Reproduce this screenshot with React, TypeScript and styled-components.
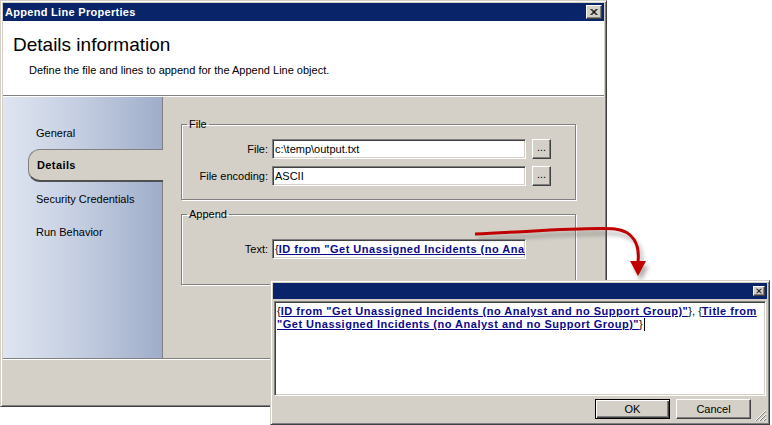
import styled, { createGlobalStyle } from 'styled-components'

const GlobalStyle = createGlobalStyle`
  html, body {
    margin: 0;
    padding: 0;
    background: #ffffff;
  }
  body {
    font-family: "Liberation Sans", Arial, sans-serif;
    font-size: 11px;
    color: #000;
  }
`

const Desktop = styled.div`
  position: relative;
  width: 772px;
  height: 425px;
  overflow: hidden;
  background: #fff;
`

const Window = styled.div<{ $left: number; $top: number; $w: number; $h: number }>`
  position: absolute;
  left: ${p => p.$left}px;
  top: ${p => p.$top}px;
  width: ${p => p.$w}px;
  height: ${p => p.$h}px;
  box-sizing: border-box;
  background: #d4d0c8;
  border-top: 1px solid #d4d0c8;
  border-left: 1px solid #d4d0c8;
  border-right: 1px solid #404040;
  border-bottom: 1px solid #404040;
  box-shadow: inset 1px 1px 0 #fff, inset -1px -1px 0 #808080;
  padding: 2px;
  display: flex;
  flex-direction: column;
`

const TitleBar = styled.div<{ $h: number }>`
  height: ${p => p.$h}px;
  flex: none;
  background: #0a246a;
  color: #fff;
  font-weight: bold;
  letter-spacing: 0.3px;
  display: flex;
  align-items: center;
  justify-content: space-between;
  padding: 0 2px 0 2px;
`

const CloseBox = styled.div<{ $size: number }>`
  width: ${p => p.$size}px;
  height: ${p => p.$size - 2}px;
  background: #d4d0c8;
  box-sizing: border-box;
  border-top: 1px solid #fff;
  border-left: 1px solid #fff;
  border-right: 1px solid #404040;
  border-bottom: 1px solid #404040;
  box-shadow: inset -1px -1px 0 #808080;
  display: flex;
  align-items: center;
  justify-content: center;
`

const Header = styled.div`
  height: 75px;
  flex: none;
  background: #fff;
  border-bottom: 1px solid #808080;
  box-shadow: 0 1px 0 #fff;
  margin-bottom: 1px;
  padding: 13px 0 0 10px;
  box-sizing: border-box;
`

const HeaderTitle = styled.div`
  font-size: 19px;
  line-height: 21px;
`

const HeaderText = styled.div`
  margin: 9px 0 0 16px;
  line-height: 13px;
`

const Body = styled.div`
  flex: none;
  height: 261px;
  display: flex;
`

const Nav = styled.div`
  width: 160px;
  flex: none;
  background: linear-gradient(to right, #dfe5f1 0%, #c3cde0 50%, #9fadca 100%);
  border-right: 1px solid #808080;
  box-sizing: border-box;
  padding-top: 19px;
  display: flex;
  flex-direction: column;
`

const NavItem = styled.div<{ $active?: boolean }>`
  height: 33px;
  box-sizing: border-box;
  margin-left: 25px;
  padding-left: 8px;
  display: flex;
  align-items: center;
  ${p =>
    p.$active &&
    `
    margin-right: -1px;
    position: relative;
    font-weight: bold;
    letter-spacing: 0.4px;
    background: #d4d0c8;
    border: 1px solid #808080;
    border-right: none;
    border-bottom: 2px solid #505050;
    border-radius: 12px 0 0 12px;
  `}
`

const Content = styled.div`
  flex: 1;
  padding: 21px 28px 0 18px;
  display: flex;
  flex-direction: column;
  gap: 8px;
`

const Group = styled.fieldset<{ $pt: number; $pb: number }>`
  margin: 0;
  padding: ${p => p.$pt}px 0 ${p => p.$pb}px 0;
  border: 1px solid #808080;
  box-shadow: inset 1px 1px 0 #fff, 1px 1px 0 #fff;
  display: flex;
  flex-direction: column;
  gap: 7px;
`

const Legend = styled.legend`
  margin-left: 5px;
  padding: 0 2px;
  line-height: 13px;
`

const Row = styled.div`
  display: flex;
  align-items: center;
  height: 20px;
`

const Label = styled.div`
  width: 86px;
  text-align: right;
  margin-right: 4px;
`

const Input = styled.div`
  width: 254px;
  height: 20px;
  box-sizing: border-box;
  background: #fff;
  border-top: 1px solid #808080;
  border-left: 1px solid #808080;
  border-right: 1px solid #fff;
  border-bottom: 1px solid #fff;
  box-shadow: inset 1px 1px 0 #404040, inset -1px -1px 0 #d4d0c8;
  padding: 0 2px;
  display: flex;
  align-items: center;
  white-space: nowrap;
  overflow: hidden;
`

const Button = styled.div<{ $w: number; $default?: boolean }>`
  width: ${p => p.$w}px;
  height: 20px;
  box-sizing: border-box;
  background: #d4d0c8;
  border-top: 1px solid #fff;
  border-left: 1px solid #fff;
  border-right: 1px solid #404040;
  border-bottom: 1px solid #404040;
  box-shadow: inset -1px -1px 0 #808080;
  display: flex;
  align-items: center;
  justify-content: center;
  ${p =>
    p.$default &&
    `
    border: 1px solid #000;
    box-shadow: inset 1px 1px 0 #fff, inset -1px -1px 0 #404040, inset -2px -2px 0 #808080;
  `}
`

const BrowseButton = styled(Button)`
  margin-left: 6px;
  padding-bottom: 4px;
`

const Footer = styled.div`
  flex: 1;
  border-top: 1px solid #808080;
  box-shadow: inset 0 1px 0 #fff;
`

const Link = styled.span`
  color: #0a0a8c;
  font-weight: bold;
  letter-spacing: 0.5px;
  text-decoration: underline;
`

const TextArea = styled.div`
  flex: 1;
  margin: 2px 1px 0 1px;
  background: #fff;
  border-top: 1px solid #808080;
  border-left: 1px solid #808080;
  border-right: 1px solid #fff;
  border-bottom: 1px solid #fff;
  box-shadow: inset 1px 1px 0 #404040, inset -1px -1px 0 #d4d0c8;
  padding: 3px 2px;
  line-height: 13px;
  white-space: nowrap;
  overflow: hidden;
`

const Caret = styled.span`
  display: inline-block;
  width: 1px;
  height: 13px;
  background: #000;
  vertical-align: top;
  margin-left: 1px;
`

const ButtonBar = styled.div`
  height: 26px;
  flex: none;
  display: flex;
  justify-content: flex-end;
  align-items: flex-start;
  padding: 3px 16px 0 0;
  box-sizing: border-box;
  gap: 6px;
  position: relative;
`

const Grip = styled.svg`
  position: absolute;
  right: 0;
  bottom: 0;
`

const ArrowLayer = styled.svg`
  position: absolute;
  left: 0;
  top: 0;
  pointer-events: none;
`

const CloseGlyph = ({ s }: { s: number }) => (
  <svg width={s} height={s} viewBox="0 0 8 7">
    <path d="M0.5 0.5 L6.5 6.5 M1.5 0.5 L7.5 6.5 M6.5 0.5 L0.5 6.5 M7.5 0.5 L1.5 6.5" stroke="#000" strokeWidth="1" />
  </svg>
)

const arrowPath = 'M475 234 C 540 231, 590 227, 615 229 C 633 231, 640 244, 638 262'

const App = () => {
  return (
    <>
      <GlobalStyle />
      <Desktop>
        <Window $left={0} $top={0} $w={607} $h={407}>
          <TitleBar $h={18}>
            <span>Append Line Properties</span>
            <CloseBox $size={16}>
              <CloseGlyph s={8} />
            </CloseBox>
          </TitleBar>
          <Header>
            <HeaderTitle>Details information</HeaderTitle>
            <HeaderText>Define the file and lines to append for the Append Line object.</HeaderText>
          </Header>
          <Body>
            <Nav>
              <NavItem>General</NavItem>
              <NavItem $active>Details</NavItem>
              <NavItem>Security Credentials</NavItem>
              <NavItem>Run Behavior</NavItem>
            </Nav>
            <Content>
              <Group $pt={8} $pb={13}>
                <Legend>File</Legend>
                <Row>
                  <Label>File:</Label>
                  <Input>c:\temp\output.txt</Input>
                  <BrowseButton $w={19}>...</BrowseButton>
                </Row>
                <Row>
                  <Label>File encoding:</Label>
                  <Input>ASCII</Input>
                  <BrowseButton $w={19}>...</BrowseButton>
                </Row>
              </Group>
              <Group $pt={18} $pb={25}>
                <Legend>Append</Legend>
                <Row>
                  <Label>Text:</Label>
                  <Input>
                    {'{'}
                    <Link>ID from "Get Unassigned Incidents (no Analyst and no Support Group)"</Link>
                    {'}'}
                  </Input>
                </Row>
              </Group>
            </Content>
          </Body>
          <Footer />
        </Window>

        <ArrowLayer width={772} height={425} viewBox="0 0 772 425">
          <defs>
            <filter id="blur" x="-20%" y="-20%" width="140%" height="140%">
              <feGaussianBlur stdDeviation="2" />
            </filter>
          </defs>
          <g transform="translate(3 5)" filter="url(#blur)" opacity="0.45">
            <path d={arrowPath} stroke="#555" strokeWidth="3" fill="none" />
            <polygon points="630,261 646,261 638,276" fill="#555" />
          </g>
          <path d={arrowPath} stroke="#c00000" strokeWidth="3" fill="none" />
          <polygon points="630,261 646,261 638,276" fill="#c00000" />
        </ArrowLayer>

        <Window $left={270} $top={280} $w={500} $h={145}>
          <TitleBar $h={16}>
            <span />
            <CloseBox $size={12}>
              <CloseGlyph s={6} />
            </CloseBox>
          </TitleBar>
          <TextArea>
            {'{'}
            <Link>ID from "Get Unassigned Incidents (no Analyst and no Support Group)"</Link>
            {'}, {'}
            <Link>
              Title from
              <br />
              "Get Unassigned Incidents (no Analyst and no Support Group)"
            </Link>
            {'}'}
            <Caret />
          </TextArea>
          <ButtonBar>
            <Button $w={75} $default>OK</Button>
            <Button $w={75}>Cancel</Button>
            <Grip width={13} height={13} viewBox="0 0 13 13">
              <path d="M12 1 L1 12 M12 5 L5 12 M12 9 L9 12" stroke="#fff" strokeWidth="1" />
              <path d="M12 2 L2 12 M12 6 L6 12 M12 10 L10 12" stroke="#808080" strokeWidth="1" />
            </Grip>
          </ButtonBar>
        </Window>
      </Desktop>
    </>
  )
}

export default App
